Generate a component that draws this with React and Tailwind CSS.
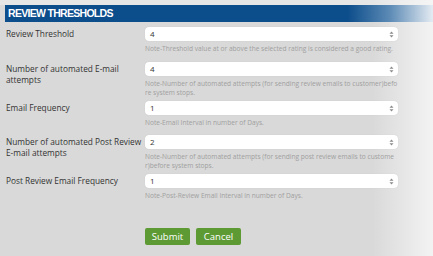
import React from "react";

const rows = [
  {
    label: "Review Threshold",
    value: "4",
    note: "Note-Threshold value at or above the selected rating is considered a good rating.",
    pb: "pb-[9px]",
  },
  {
    label: "Number of automated E-mail attempts",
    value: "4",
    note: "Note-Number of automated attempts (for sending review emails to customer)before system stops.",
    pb: "pb-[4px]",
  },
  {
    label: "Email Frequency",
    value: "1",
    note: "Note-Email Interval in number of Days.",
    pb: "pb-[8px]",
  },
  {
    label: "Number of automated Post Review E-mail attempts",
    value: "2",
    note: "Note-Number of automated attempts (for sending post review emails to customer)before system stops.",
    pb: "pb-[4px]",
  },
  {
    label: "Post Review Email Frequency",
    value: "1",
    note: "Note-Post-Review Email Interval in number of Days.",
    pb: "pb-[8px]",
  },
];

const UpDown = () => (
  <svg width="5" height="7" viewBox="0 0 5 7" className="shrink-0">
    <path d="M2.5 0.5 L4.5 2.8 L0.5 2.8 Z" fill="#8a8a8a" />
    <path d="M2.5 6.5 L4.5 4.2 L0.5 4.2 Z" fill="#8a8a8a" />
  </svg>
);

const App = () => {
  return (
    <div
      className="w-[433px] h-[256px] overflow-hidden bg-[linear-gradient(to_right,#d9d9d9_86%,#f3f3f3_100%)]"
      style={{ fontFamily: '"Open Sans", "DejaVu Sans", sans-serif' }}
    >
      <div className="h-[5px] bg-[linear-gradient(to_right,#e6e6e6_86%,#f5f5f5_100%)]" />

      {/* Header bar */}
      <div className="ml-[5px] h-[17px] flex items-center pl-[3px] bg-[linear-gradient(to_right,#0c4d8b_80%,#5d8bb6_90%,#e4ebf2_100%)]">
        <h2
          className="text-white font-bold text-[10.5px] tracking-[-0.7px] leading-none"
          style={{ fontFamily: '"Liberation Sans", Arial, sans-serif' }}
        >
          REVIEW THRESHOLDS
        </h2>
      </div>

      {/* Form rows */}
      <div className="pt-[5px]">
        {rows.map((row) => (
          <div key={row.label} className={`flex ${row.pb}`}>
            <div className="w-[145px] pl-[6px] text-[8.3px] leading-[11px] text-[#333] pt-[1px]">
              {row.label}
            </div>
            <div className="w-[253px]">
              <div className="h-[14px] bg-white rounded-[4px] flex items-center justify-between pl-[5px] pr-[4px] shadow-[0_0_1px_rgba(0,0,0,0.15)]">
                <span className="text-[8px] text-[#333] leading-none">{row.value}</span>
                <UpDown />
              </div>
              <p className="mt-[3px] text-[6.6px] leading-[9px] text-[#a0a0a0] break-all">
                {row.note}
              </p>
            </div>
          </div>
        ))}
      </div>

      {/* Buttons */}
      <div className="flex gap-[6px] pl-[145px] mt-[20px]">
        <button className="w-[45px] h-[17px] bg-[#5d9a34] text-white text-[9.5px] rounded-[2px] leading-none">
          Submit
        </button>
        <button className="w-[45px] h-[17px] bg-[#5d9a34] text-white text-[9.5px] rounded-[2px] leading-none">
          Cancel
        </button>
      </div>
    </div>
  );
};

export default App;
